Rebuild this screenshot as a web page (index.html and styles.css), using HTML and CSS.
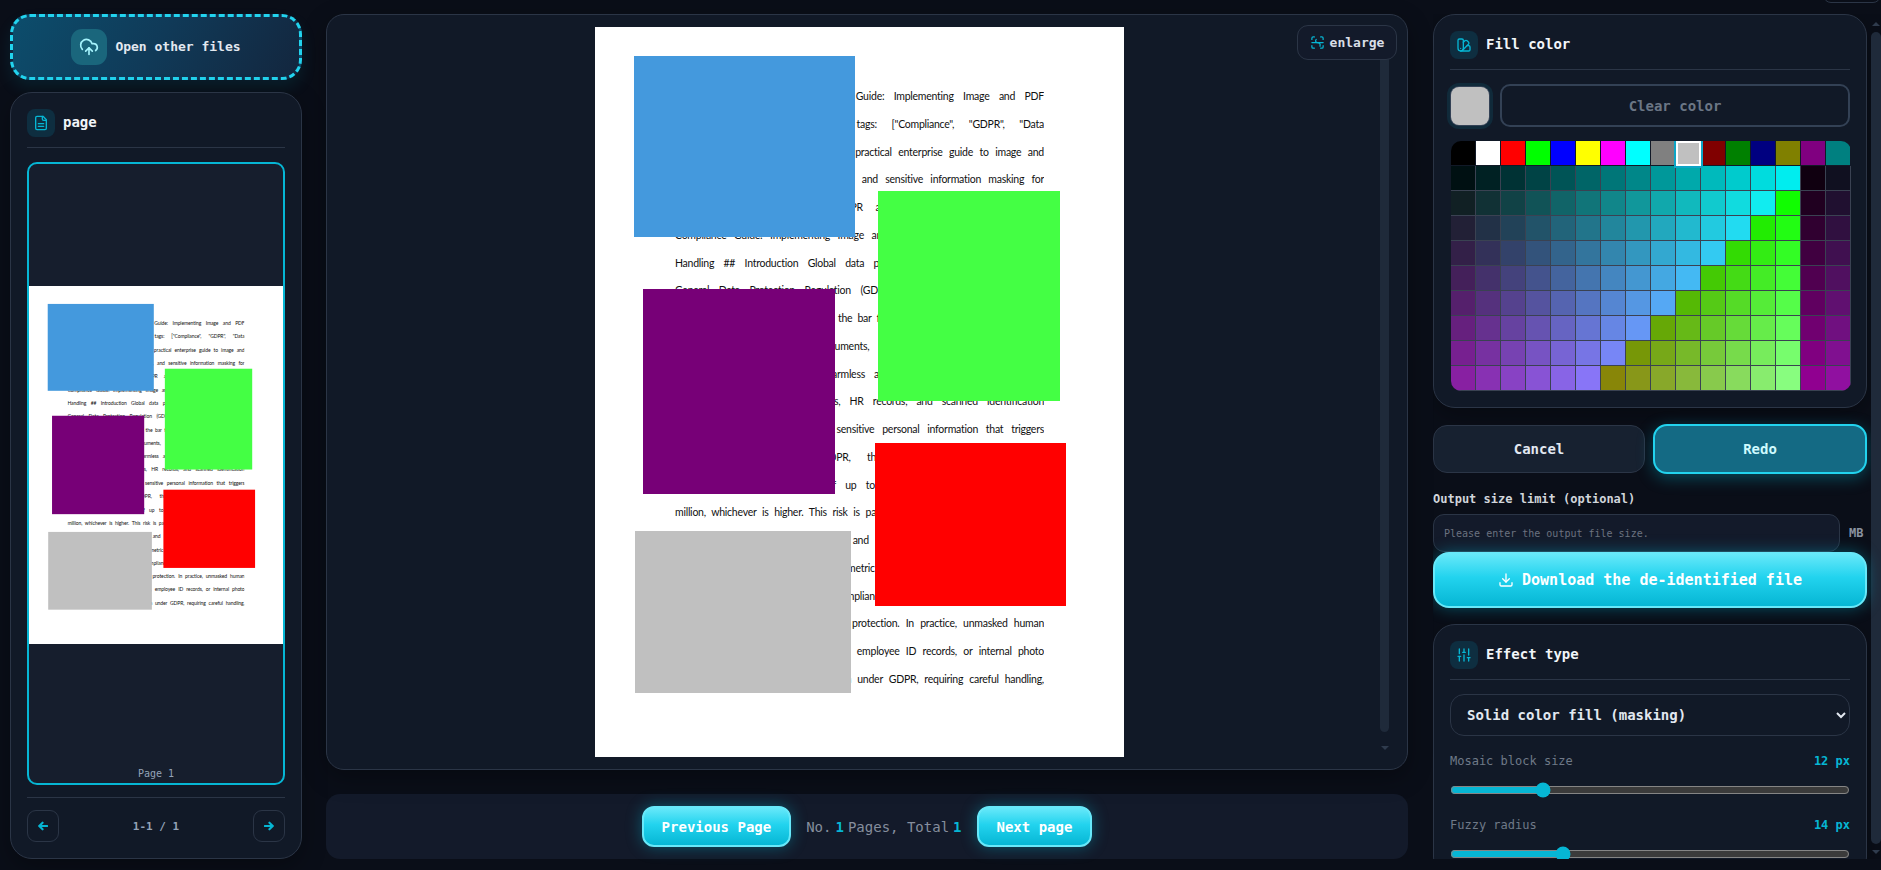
FILE: index.html
```html
<!DOCTYPE html>
<html lang="en">
<head>
    <meta charset="UTF-8">
    <meta name="viewport" content="width=device-width, initial-scale=1.0">
    <title>De-identify files</title>
    <link rel="stylesheet" href="styles.css">
</head>
<body>

<div class="top-stub"></div>

<div class="app">

    <!-- Left column: upload and page list -->
    <aside class="left-col">
        <button class="upload-btn">
            <span class="upload-icon">
                <svg width="20" height="20" viewBox="0 0 24 24"><path d="M12 13v8"/><path d="M4 14.9A7 7 0 1 1 15.7 8h1.8a4.5 4.5 0 0 1 2.5 8.2"/><path d="m8 17 4-4 4 4"/></svg>
            </span>
            <span class="upload-text">Open other files</span>
        </button>

        <section class="panel pages-panel">
            <div class="panel-head">
                <span class="head-icon">
                    <svg width="16" height="16" viewBox="0 0 24 24"><path d="M15 2H6a2 2 0 0 0-2 2v16a2 2 0 0 0 2 2h12a2 2 0 0 0 2-2V7Z"/><path d="M14 2v4a2 2 0 0 0 2 2h4"/><path d="M16 13H8"/><path d="M16 17H8"/></svg>
                </span>
                <h3>page</h3>
            </div>
            <div class="thumb-card">
                <div class="thumb-area">
                    <div class="thumb-sheet"><div class="thumb-scale" id="thumbScale"></div></div>
                </div>
                <div class="thumb-label">Page 1</div>
            </div>
            <div class="pager">
                <button class="pager-btn">
                    <svg width="10" height="10" viewBox="0 0 24 24"><path d="M11 4 3 12l8 8"/><path d="M4 12h18"/></svg>
                </button>
                <span>1-1 / 1</span>
                <button class="pager-btn">
                    <svg width="10" height="10" viewBox="0 0 24 24"><path d="m13 4 8 8-8 8"/><path d="M20 12H2"/></svg>
                </button>
            </div>
        </section>
    </aside>

    <!-- Middle column: document preview -->
    <main class="center-col">
        <section class="viewer">
            <div class="viewer-scroll">
                <div class="sheet" id="sheet">
                    <div class="sheet-text">
                        <div class="line">--- title: "GDPR Data Compliance Guide: Implementing Image and PDF</div>
                        <div class="line">De-identification Data Handling" tags: ["Compliance", "GDPR", "Data</div>
                        <div class="line">Protection", "Privacy"] --- excerpt: "A practical enterprise guide to image and</div>
                        <div class="line">PDF de-identification, redaction tools, and sensitive information masking for</div>
                        <div class="line">regulators." --- # Enterprise GDPR and Data Protection Workflows</div>
                        <div class="line">Compliance Guide: Implementing Image and PDF De-identification for Data</div>
                        <div class="line">Handling ## Introduction Global data protection laws, notably the EU's</div>
                        <div class="line">General Data Protection Regulation (GDPR), have raised the compliance</div>
                        <div class="line">companies today have now raised the bar for handling images, files and scans,</div>
                        <div class="line">such as attached contract documents, and many other sensitive scans</div>
                        <div class="line">Files that may seem largely harmless as they often contain faces, IDs,</div>
                        <div class="line">including customer, client photos, HR records, and scanned identification</div>
                        <div class="line">documents often contain highly sensitive personal information that triggers</div>
                        <div class="line">legal obligations. Under GDPR, the unauthorized exposure can</div>
                        <div class="line">result in administrative fines of up to 4% of global turnover or €20</div>
                        <div class="line">million, whichever is higher. This risk is particularly acute in legal, finance, HR</div>
                        <div class="line">healthcare, banking, public services, and insurance, where PDFs are shared</div>
                        <div class="line">with partners. Faces, signatures, biometric data and exact location metadata</div>
                        <div class="line">all pose risks. Enterprise GDPR compliance therefore demands very reliable</div>
                        <div class="line">redaction is a key part of our data protection. In practice, unmasked human</div>
                        <div class="line">faces in customer files, scanned IDs, employee ID records, or internal photo</div>
                        <div class="line">libraries may constitute personal data under GDPR, requiring careful handling,</div>
                    </div>
                    <div class="mask mask-blue"></div>
                    <div class="mask mask-green"></div>
                    <div class="mask mask-purple"></div>
                    <div class="mask mask-red"></div>
                    <div class="mask mask-gray"></div>
                </div>
            </div>
            <div class="scrollbar viewer-bar">
                <span class="arrow-up"></span>
                <span class="bar-thumb"></span>
                <span class="arrow-down"></span>
            </div>
            <button class="enlarge-btn">
                <svg width="15" height="15" viewBox="0 0 24 24"><path d="M3 7V5a2 2 0 0 1 2-2h2"/><path d="M17 3h2a2 2 0 0 1 2 2v2"/><path d="M21 17v2a2 2 0 0 1-2 2h-2"/><path d="M7 21H5a2 2 0 0 1-2-2v-2"/><path d="M3 12h18"/><path d="M10 7c-2 2-1 5 2 5s5 2 4 6"/></svg>
                enlarge
            </button>
        </section>

        <div class="page-bar">
            <button class="primary-btn page-btn">Previous Page</button>
            <div class="page-info">
                <span>No.</span><b>1</b><span>Pages, Total</span><b>1</b>
            </div>
            <button class="primary-btn page-btn">Next page</button>
        </div>
    </main>

    <!-- Right column: settings -->
    <aside class="right-col">
        <div class="right-scroll">
            <section class="panel fill-panel">
                <div class="panel-head">
                    <span class="head-icon">
                        <svg width="16" height="16" viewBox="0 0 24 24"><path d="M11 17a4 4 0 0 1-8 0V5a2 2 0 0 1 2-2h4a2 2 0 0 1 2 2Z"/><path d="M16.7 13H19a2 2 0 0 1 2 2v4a2 2 0 0 1-2 2H7"/><path d="M7 17h.01"/><path d="m11 8 2.3-2.3a2.4 2.4 0 0 1 3.4 0l1.9 1.9a2.4 2.4 0 0 1 0 3.4L9.9 19.8"/></svg>
                    </span>
                    <h3>Fill color</h3>
                </div>
                <div class="color-row">
                    <span class="current-color"></span>
                    <button class="clear-btn">Clear color</button>
                </div>
                <div class="palette" id="palette"></div>
            </section>

            <div class="action-row">
                <button class="cancel-btn">Cancel</button>
                <button class="redo-btn">Redo</button>
            </div>

            <label class="size-label" for="sizeLimit">Output size limit (optional)</label>
            <div class="size-row">
                <input type="text" id="sizeLimit" placeholder="Please enter the output file size.">
                <span>MB</span>
            </div>

            <button class="primary-btn download-btn">
                <svg width="16" height="16" viewBox="0 0 24 24"><path d="M12 3v12"/><path d="m7 10 5 5 5-5"/><path d="M3 16v3a2 2 0 0 0 2 2h14a2 2 0 0 0 2-2v-3"/></svg>
                Download the de-identified file
            </button>

            <section class="panel effect-panel">
                <div class="panel-head">
                    <span class="head-icon">
                        <svg width="16" height="16" viewBox="0 0 24 24"><path d="M5 21v-7"/><path d="M5 10V3"/><path d="M12 21v-9"/><path d="M12 8V3"/><path d="M19 21v-5"/><path d="M19 12V3"/><path d="M3 14h4"/><path d="M10 8h4"/><path d="M17 16h4"/></svg>
                    </span>
                    <h3>Effect type</h3>
                </div>
                <select class="effect-select">
                    <option>Solid color fill (masking)</option>
                    <option>Mosaic</option>
                    <option>Blur</option>
                </select>
                <div class="slider-head">
                    <span>Mosaic block size</span><b>12 px</b>
                </div>
                <input class="slider" type="range" min="4" max="40" value="12">
                <div class="slider-head">
                    <span>Fuzzy radius</span><b>14 px</b>
                </div>
                <input class="slider" type="range" min="2" max="46" value="14">
            </section>
        </div>
        <div class="scrollbar right-bar">
            <span class="arrow-up"></span>
            <span class="bar-thumb"></span>
            <span class="arrow-down"></span>
        </div>
    </aside>
</div>

<script src="script.js"></script>
</body>
</html>
```

FILE: styles.css
```css
* {
    box-sizing: border-box;
}
body {
    margin: 0;
    height: 870px;
    overflow: hidden;
    background-color: #0a0e18;
    font-family: "DejaVu Sans Mono", "Liberation Mono", monospace;
    color: #e2e8f0;
    color-scheme: dark;
}
button {
    font-family: inherit;
    cursor: pointer;
}
svg {
    fill: none;
    stroke: currentColor;
    stroke-width: 2;
    stroke-linecap: round;
    stroke-linejoin: round;
    flex-shrink: 0;
}
h3 {
    margin: 0;
    padding-bottom: 2px;
    font-size: 14px;
    font-weight: 700;
    color: #f1f5f9;
}
.top-stub {
    position: absolute;
    top: -30px;
    right: 0;
    width: 58px;
    height: 33px;
    border: 1px solid #2b3546;
    border-radius: 8px;
}
.app {
    display: flex;
    gap: 24px;
    height: 870px;
    padding: 14px 0 11px 10px;
}

/* shared panel */
.panel {
    background-color: #111927;
    border: 1px solid #2b3546;
    border-radius: 22px;
    padding: 16px;
    box-shadow: 0 8px 24px rgba(0, 0, 0, 0.3);
}
.panel-head {
    display: flex;
    align-items: center;
    gap: 8px;
    padding-bottom: 10px;
    border-bottom: 1px solid #2b3546;
    margin-bottom: 14px;
}
.head-icon {
    width: 28px;
    height: 28px;
    border-radius: 8px;
    background-color: #0e2e40;
    color: #06b6d4;
    display: flex;
    align-items: center;
    justify-content: center;
}
.primary-btn {
    border: 2px solid #67e8f9;
    color: #fff;
    font-weight: 700;
    background: linear-gradient(180deg, #67e8f9 0%, #22d3ee 45%, #06b6d4 100%);
    box-shadow: 0 0 16px rgba(6, 182, 212, 0.4);
}

/* left column */
.left-col {
    width: 292px;
    flex-shrink: 0;
    display: flex;
    flex-direction: column;
    gap: 12px;
}
.upload-btn {
    height: 66px;
    flex-shrink: 0;
    display: flex;
    align-items: center;
    justify-content: center;
    gap: 8px;
    border: 3px dashed #22d3ee;
    border-radius: 20px;
    background: linear-gradient(120deg, #0c4d6c 0%, #103a58 50%, #13263e 100%);
    color: #e2e8f0;
    font-size: 13px;
    font-weight: 700;
    box-shadow: 0 8px 16px rgba(6, 182, 212, 0.1);
}
.upload-text {
    padding-bottom: 2px;
}
.upload-icon {
    width: 36px;
    height: 36px;
    border-radius: 11px;
    background-color: #1a667c;
    color: #a5f3fc;
    display: flex;
    align-items: center;
    justify-content: center;
}
.pages-panel {
    flex: 1;
    display: flex;
    flex-direction: column;
    min-height: 0;
}
.thumb-card {
    flex: 1;
    min-height: 0;
    display: flex;
    flex-direction: column;
    background-color: #161e2d;
    border: 2px solid #06b6d4;
    border-radius: 10px;
}
.thumb-area {
    flex: 1;
    min-height: 0;
    display: flex;
    align-items: center;
}
.thumb-sheet {
    width: 100%;
    height: 358px;
    padding-top: 4px;
    background-color: #fff;
    overflow: hidden;
}
.thumb-scale {
    width: 529px;
    height: 730px;
    transform: scale(0.48);
    transform-origin: 0 0;
}
.thumb-label {
    height: 17px;
    text-align: center;
    font-size: 10px;
    line-height: 15px;
    color: #94a3b8;
}
.pager {
    display: flex;
    align-items: center;
    justify-content: space-between;
    margin-top: 12px;
    padding-top: 12px;
    border-top: 1px solid #2b3546;
    font-size: 11px;
    font-weight: 700;
    color: #94a3b8;
}
.pager-btn {
    width: 32px;
    height: 32px;
    display: flex;
    align-items: center;
    justify-content: center;
    background: none;
    border: 1px solid #2b3546;
    border-radius: 9px;
    color: #06b6d4;
}
.pager-btn svg {
    stroke-width: 5;
}

/* middle column */
.center-col {
    width: 1082px;
    flex-shrink: 0;
    display: flex;
    flex-direction: column;
    gap: 24px;
}
.viewer {
    position: relative;
    height: 756px;
    display: flex;
    background-color: #111927;
    border: 1px solid #2b3546;
    border-radius: 18px;
    box-shadow: 0 8px 24px rgba(0, 0, 0, 0.3);
}
.viewer-scroll {
    flex: 1;
    display: flex;
    justify-content: center;
    padding: 12px 0 0 12px;
}
.sheet {
    position: relative;
    width: 529px;
    height: 730px;
    background-color: #fff;
    overflow: hidden;
}
.sheet-text {
    padding: 56px 80px 0;
    font-family: "Lato", "Noto Sans", sans-serif;
    font-size: 10.5px;
    letter-spacing: -0.25px;
    color: #111;
}
.line {
    height: 27.75px;
    line-height: 27.75px;
    overflow: hidden;
    text-align: justify;
    text-align-last: justify;
}
.mask {
    position: absolute;
}
.mask-blue {
    left: 39px;
    top: 29px;
    width: 221px;
    height: 181px;
    background-color: #4499dd;
}
.mask-green {
    left: 283px;
    top: 164px;
    width: 182px;
    height: 210px;
    background-color: #44ff44;
}
.mask-purple {
    left: 48px;
    top: 262px;
    width: 192px;
    height: 205px;
    background-color: #770077;
}
.mask-red {
    left: 280px;
    top: 416px;
    width: 191px;
    height: 163px;
    background-color: #ff0000;
}
.mask-gray {
    left: 40px;
    top: 504px;
    width: 216px;
    height: 162px;
    background-color: #c0c0c0;
}
.scrollbar {
    display: flex;
    flex-direction: column;
    align-items: center;
    flex-shrink: 0;
}
.bar-thumb {
    flex: 1;
    width: 100%;
    background-color: #1f2a3a;
    border-radius: 5px;
}
.arrow-up,
.arrow-down {
    width: 0;
    height: 0;
    border-left: 4px solid transparent;
    border-right: 4px solid transparent;
}
.arrow-up {
    border-bottom: 4px solid #2f3b4d;
}
.arrow-down {
    border-top: 4px solid #2f3b4d;
}
.viewer-bar {
    width: 9px;
    margin: 14px 18px 19px 0;
    gap: 14px;
}
.enlarge-btn {
    position: absolute;
    top: 10px;
    right: 10px;
    width: 100px;
    height: 35px;
    display: flex;
    align-items: center;
    justify-content: center;
    gap: 5px;
    background-color: #131a2a;
    border: 1px solid #2b3546;
    border-radius: 11px;
    color: #d9dee6;
    font-size: 13px;
    font-weight: 700;
}
.enlarge-btn svg {
    color: #06b6d4;
}
.page-bar {
    height: 65px;
    display: flex;
    align-items: center;
    justify-content: center;
    gap: 15px;
    background-color: #131a2a;
    border-radius: 14px;
}
.page-btn {
    height: 41px;
    padding: 0 18px;
    border-radius: 12px;
    font-size: 14px;
}
.page-info {
    display: flex;
    gap: 4px;
    font-size: 14px;
    color: #858e9d;
}
.page-info b {
    color: #06b6d4;
}

/* right column */
.right-col {
    flex: 1;
    min-width: 0;
    display: flex;
    gap: 4px;
    margin-left: 1px;
    overflow: hidden;
}
.right-scroll {
    width: 434px;
    flex-shrink: 0;
}
.fill-panel {
    height: 394px;
}
.color-row {
    display: flex;
    align-items: center;
    gap: 11px;
    margin-left: -1px;
}
.current-color {
    width: 38px;
    height: 38px;
    margin: 0 0 0 2px;
    border-radius: 8px;
    background-color: #c0c0c0;
    box-shadow: 0 0 0 1px #334155, 0 0 0 4px #102a3a;
}
.clear-btn {
    flex: 1;
    height: 43px;
    background: none;
    border: 2px solid #334155;
    border-radius: 10px;
    color: #6b7685;
    font-size: 14px;
    font-weight: 700;
}
.palette {
    display: grid;
    grid-template-columns: repeat(16, 25px);
    grid-auto-rows: 25px;
    margin: 14px 0 0 1px;
    width: 400px;
    border-radius: 10px;
    overflow: hidden;
}
.swatch {
    border-right: 1px solid #3a4252;
    border-bottom: 1px solid #3a4252;
}
.swatch.first-row {
    border-color: transparent;
    background-clip: padding-box;
}
.swatch.selected {
    position: relative;
    z-index: 1;
    border: 2px solid #fff;
    outline: 2px solid #0ea5c6;
}
.action-row {
    display: flex;
    align-items: center;
    gap: 8px;
    margin-top: 16px;
}
.cancel-btn,
.redo-btn {
    flex: 1;
    font-size: 14px;
    font-weight: 700;
}
.cancel-btn {
    height: 48px;
    background-color: #172130;
    border: 1px solid #2b3546;
    border-radius: 14px;
    color: #e2e8f0;
}
.redo-btn {
    height: 50px;
    background-color: #146a84;
    border: 2px solid #22d3ee;
    border-radius: 14px;
    color: #cffafe;
    box-shadow: 0 4px 16px rgba(6, 182, 212, 0.35);
}
.size-label {
    display: block;
    margin-top: 17px;
    font-size: 12px;
    font-weight: 700;
    line-height: 16px;
    color: #d1d5db;
}
.size-row {
    display: flex;
    align-items: center;
    gap: 9px;
    margin-top: 7px;
    font-size: 12px;
    font-weight: 700;
    color: #8a93a1;
}
.size-row input {
    width: 407px;
    height: 38px;
    padding: 0 10px;
    background-color: #131a2a;
    border: 1px solid #2b3546;
    border-radius: 11px;
    font-family: inherit;
    font-size: 10px;
    color: #e2e8f0;
}
.size-row input::placeholder {
    color: #6b7280;
}
.download-btn {
    width: 100%;
    height: 56px;
    display: flex;
    align-items: center;
    justify-content: center;
    gap: 8px;
    border-radius: 16px;
    font-size: 15px;
    position: relative;
}
.effect-panel {
    margin-top: 16px;
}
.effect-select {
    width: 100%;
    height: 42px;
    padding: 0 12px;
    background-color: #111927;
    border: 1px solid #2b3546;
    border-radius: 14px;
    font-family: inherit;
    font-size: 14px;
    font-weight: 700;
    color: #e2e8f0;
}
.slider-head {
    display: flex;
    justify-content: space-between;
    margin-top: 17px;
    font-size: 12px;
    line-height: 16px;
    color: #6f7988;
}
.slider + .slider-head {
    margin-top: 19px;
}
.slider-head b {
    color: #06b6d4;
}
.slider {
    display: block;
    width: 100%;
    height: 16px;
    margin: 13px 0 0;
    accent-color: #06b6d4;
}
.right-bar {
    width: 10px;
    gap: 6px;
    padding: 8px 0 5px;
}
```

FILE: script.js
```js
// Paleta de colores: fila fija y degradado calculado
const baseColors = ['#000000', '#ffffff', '#ff0000', '#00ff00', '#0000ff', '#ffff00', '#ff00ff', '#00ffff',
    '#808080', '#c0c0c0', '#800000', '#008000', '#000080', '#808000', '#800080', '#008080'];

const palette = document.getElementById('palette');

baseColors.forEach(function(color, i) {
    const cell = document.createElement('div');
    cell.className = i === 9 ? 'swatch first-row selected' : 'swatch first-row';
    cell.style.backgroundColor = color;
    palette.appendChild(cell);
});

function gradientColor(row, col) {
    if (col === 14) return `rgb(${row * 16}, 0, ${row * 16})`;
    if (col === 15) return `rgb(${row * 16}, 16, ${row * 16 + 16})`;
    const red = (row - 1) * 17;
    const green = Math.min(255, (row === 1 ? 16 : 32) + col * 17);
    const blue = (row * 18 + col * 17) % 256;
    return `rgb(${red}, ${green}, ${blue})`;
}

for (let row = 1; row <= 9; row++) {
    for (let col = 0; col < 16; col++) {
        const cell = document.createElement('div');
        cell.className = 'swatch';
        cell.style.backgroundColor = gradientColor(row, col);
        palette.appendChild(cell);
    }
}

// La miniatura es una copia de la hoja
const sheetCopy = document.getElementById('sheet').cloneNode(true);
sheetCopy.removeAttribute('id');
document.getElementById('thumbScale').appendChild(sheetCopy);
```
